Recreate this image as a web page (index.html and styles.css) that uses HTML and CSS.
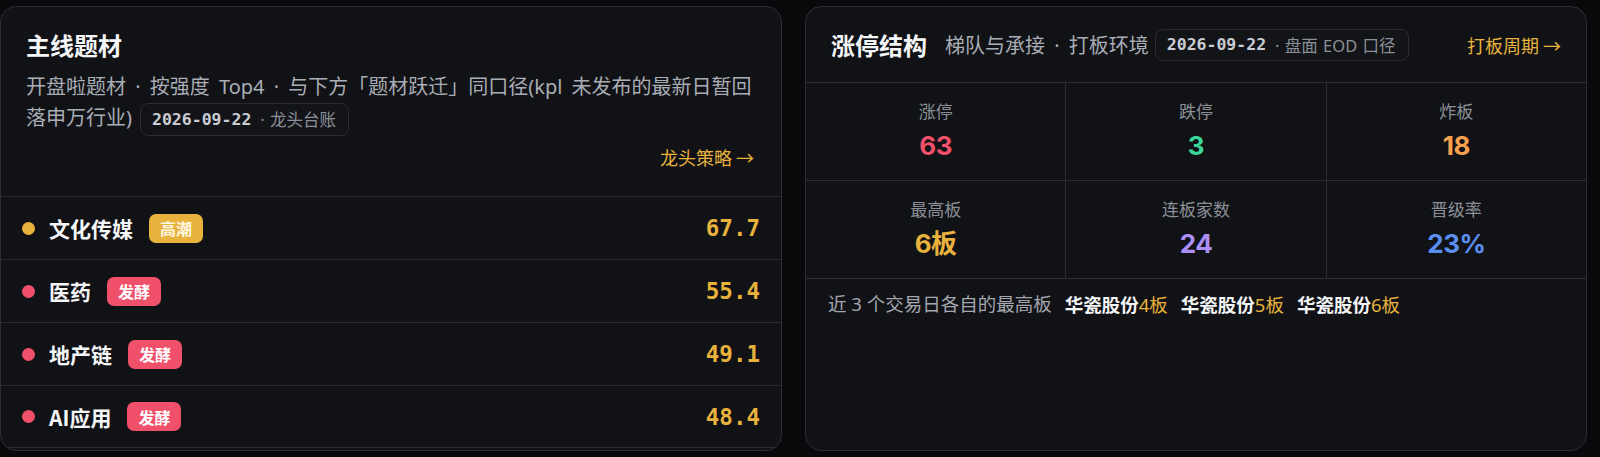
FILE: index.html
```html
<!DOCTYPE html>
<html lang="zh-CN">
<head>
<meta charset="utf-8">
<title>主线题材 / 涨停结构</title>
<link rel="stylesheet" href="styles.css">
</head>
<body>
<div class="page">
  <section class="card themes">
    <header class="themes-head">
      <h2 class="title">主线题材</h2>
      <p class="sub">开盘啦题材 · 按强度 Top4 · 与下方「题材跃迁」同口径(kpl 未发布的最新日暂回落申万行业)<span class="tag"><span class="tag-date">2026-09-22</span><span class="tag-note">· 龙头台账</span></span></p>
      <div class="link-row"><a class="link">龙头策略 →</a></div>
    </header>
    <ul class="theme-list">
      <li class="theme-row">
        <span class="dot dot-gold"></span>
        <span class="theme-name">文化传媒</span>
        <span class="badge badge-gold">高潮</span>
        <span class="theme-score">67.7</span>
      </li>
      <li class="theme-row">
        <span class="dot dot-red"></span>
        <span class="theme-name">医药</span>
        <span class="badge badge-red">发酵</span>
        <span class="theme-score">55.4</span>
      </li>
      <li class="theme-row">
        <span class="dot dot-red"></span>
        <span class="theme-name">地产链</span>
        <span class="badge badge-red">发酵</span>
        <span class="theme-score">49.1</span>
      </li>
      <li class="theme-row">
        <span class="dot dot-red"></span>
        <span class="theme-name">AI应用</span>
        <span class="badge badge-red">发酵</span>
        <span class="theme-score">48.4</span>
      </li>
    </ul>
  </section>

  <section class="card limits">
    <header class="limits-head">
      <h2 class="title">涨停结构</h2>
      <span class="head-sub">梯队与承接 · 打板环境</span>
      <span class="tag"><span class="tag-date">2026-09-22</span><span class="tag-note">· 盘面 EOD 口径</span></span>
      <a class="link head-link">打板周期 →</a>
    </header>
    <div class="stats">
      <div class="stat"><span class="stat-label">涨停</span><span class="stat-value c-red">63</span></div>
      <div class="stat"><span class="stat-label">跌停</span><span class="stat-value c-green">3</span></div>
      <div class="stat"><span class="stat-label">炸板</span><span class="stat-value c-orange">18</span></div>
      <div class="stat"><span class="stat-label">最高板</span><span class="stat-value c-gold">6板</span></div>
      <div class="stat"><span class="stat-label">连板家数</span><span class="stat-value c-purple">24</span></div>
      <div class="stat"><span class="stat-label">晋级率</span><span class="stat-value c-blue">23%</span></div>
    </div>
    <p class="recent">
      <span class="recent-label">近 3 个交易日各自的最高板</span>
      <span class="recent-item"><b>华瓷股份</b><span class="lv">4板</span></span>
      <span class="recent-item"><b>华瓷股份</b><span class="lv">5板</span></span>
      <span class="recent-item"><b>华瓷股份</b><span class="lv">6板</span></span>
    </p>
  </section>
</div>
</body>
</html>
```

FILE: styles.css
```css
* { box-sizing: border-box; }

html, body {
  margin: 0;
  padding: 0;
  background: #08090b;
  height: 457px;
  overflow: hidden;
}

body {
  font-family: "Noto Sans", "Noto Sans CJK SC", sans-serif;
  color: #e9eaee;
}

.page {
  display: grid;
  grid-template-columns: 1fr 1fr;
  gap: 23px;
  padding: 6px 13px 0 0;
  height: 451px;
}

.card {
  background: #111216;
  border: 1px solid #2c2e34;
  border-radius: 16px;
  overflow: hidden;
  display: flex;
  flex-direction: column;
}

.title {
  margin: 0;
  font-family: "Noto Sans CJK SC", sans-serif;
  font-size: 24px;
  line-height: 31px;
  font-weight: 700;
  color: #f4f5f7;
}

.link {
  font-family: "Noto Sans CJK SC", sans-serif;
  color: #e8b23c;
  font-size: 18px;
  line-height: 24px;
  text-decoration: none;
}

/* tag */
.tag {
  display: inline-flex;
  align-items: center;
  height: 33px;
  padding: 0 12px 0 11px;
  margin-left: 8px;
  border: 1px solid #2a2c32;
  border-radius: 8px;
  background: #131418;
  vertical-align: middle;
  white-space: nowrap;
  word-spacing: normal;
}

.tag-date {
  font-family: "DejaVu Sans Mono", "Liberation Mono", monospace;
  font-weight: 700;
  font-size: 16.5px;
  color: #c9ccd3;
}

.tag-note {
  margin-left: 9px;
  font-size: 16.5px;
  color: #8b9098;
  word-spacing: 1px;
}

/* left card */
.themes-head {
  padding: 22px 27px 0 25px;
  height: 189px;
}

.sub {
  margin: 11px -5px 0 0;
  font-size: 20px;
  line-height: 31px;
  color: #a9adb5;
  word-spacing: 4px;
}

.link-row {
  display: flex;
  justify-content: flex-end;
  margin-top: 9px;
}

.theme-list {
  list-style: none;
  margin: 0;
  padding: 0;
}

.theme-row {
  display: flex;
  align-items: center;
  height: 63px;
  padding: 0 21px 0 21px;
  border-top: 1px solid #2a2c31;
}

.theme-row:last-child {
  border-bottom: 1px solid #2a2c31;
}

.dot {
  width: 13px;
  height: 13px;
  border-radius: 50%;
  flex: none;
}

.dot-gold { background: #e8b23c; }
.dot-red { background: #f0506a; }

.theme-name {
  margin-left: 14px;
  font-family: "Noto Sans CJK SC", sans-serif;
  font-size: 21px;
  font-weight: 700;
  color: #f4f5f7;
}

.badge {
  margin-left: 16px;
  height: 29px;
  padding: 0 11px;
  border-radius: 7px;
  display: inline-flex;
  align-items: center;
  font-family: "Noto Sans CJK SC", sans-serif;
  font-size: 16px;
  font-weight: 700;
  color: #fff;
}

.badge-gold { background: #e8b23c; color: #fff6e0; }
.badge-red { background: #f0506a; }

.theme-score {
  margin-left: auto;
  font-family: "DejaVu Sans Mono", "Liberation Mono", monospace;
  font-weight: 700;
  font-size: 22.5px;
  color: #e8b23c;
}

/* right card */
.limits-head {
  display: flex;
  align-items: center;
  height: 76px;
  padding: 0 25px 0 25px;
  border-bottom: 1px solid #2c2e34;
}

.head-sub {
  margin-left: 18px;
  font-size: 20px;
  color: #a9adb5;
  word-spacing: 4px;
}

.limits-head .tag {
  height: 32px;
  margin-left: 6px;
}

.head-link {
  margin-left: auto;
}

.stats {
  display: grid;
  grid-template-columns: repeat(3, 1fr);
  gap: 1px;
  background: #2c2e34;
  border-bottom: 1px solid #2c2e34;
}

.stat {
  background: #111216;
  height: 97px;
  display: flex;
  flex-direction: column;
  align-items: center;
  padding-top: 15px;
}

.stat-label {
  font-family: "Noto Sans CJK SC", sans-serif;
  font-size: 17px;
  line-height: 26px;
  color: #8b9098;
}

.stat-value {
  margin-top: 5px;
  font-family: "Inter", "Noto Sans CJK SC", sans-serif;
  font-size: 26px;
  line-height: 34px;
  font-weight: 700;
  letter-spacing: -0.5px;
}

.c-red { color: #f0506a; }
.c-green { color: #3ad79b; }
.c-orange { color: #f7a04d; }
.c-gold { color: #e8b23c; }
.c-purple { color: #ac8ef7; }
.c-blue { color: #5b8ff0; }

.recent {
  margin: 0;
  padding: 12px 22px 0 22px;
  font-size: 18.5px;
  line-height: 26px;
  display: flex;
  gap: 13px;
}

.recent-label { color: #a3a7af; }

.recent-item b {
  font-family: "Noto Sans CJK SC", sans-serif;
  font-weight: 700;
  color: #f4f5f7;
}

.lv { color: #e8b23c; }
```
